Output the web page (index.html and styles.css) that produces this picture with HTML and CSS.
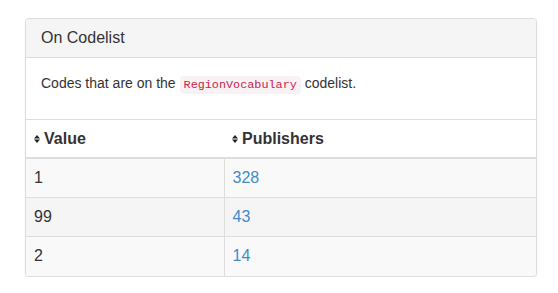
FILE: index.html
```html
<!DOCTYPE html>
<html>
<head>
<meta charset="utf-8">
<link rel="stylesheet" href="styles.css">
</head>
<body>
<div class="wrap">
  <div class="panel">
    <div class="panel-heading"><h3 class="panel-title">On Codelist</h3></div>
    <div class="panel-body">
      <p>Codes that are on the <code>RegionVocabulary</code> codelist.</p>
    </div>
    <table class="table">
      <thead>
        <tr>
          <th class="col-value"><svg class="sort" width="6" height="8" viewBox="0 0 6 8"><polygon points="0,3.4 3,0 6,3.4"/><polygon points="0,4.6 6,4.6 3,8"/></svg>Value</th>
          <th><svg class="sort" width="6" height="8" viewBox="0 0 6 8"><polygon points="0,3.4 3,0 6,3.4"/><polygon points="0,4.6 6,4.6 3,8"/></svg>Publishers</th>
        </tr>
      </thead>
      <tbody>
        <tr class="odd"><td>1</td><td><a href="#">328</a></td></tr>
        <tr class="even"><td>99</td><td><a href="#">43</a></td></tr>
        <tr class="odd"><td>2</td><td><a href="#">14</a></td></tr>
      </tbody>
    </table>
  </div>
</div>
</body>
</html>
```

FILE: styles.css
```css
html, body {
  margin: 0;
  padding: 0;
  background: #fff;
}
body {
  font-family: "Liberation Sans", Arial, sans-serif;
  font-size: 14px;
  line-height: 20px;
  color: #333;
}
.wrap {
  padding: 18px 21px 0 25px;
}
.panel {
  border: 1px solid #ddd;
  border-radius: 4px;
  background: #fff;
  box-shadow: 0 1px 2px rgba(0, 0, 0, 0.08);
  overflow: hidden;
}
.panel-heading {
  background: #f5f5f5;
  border-bottom: 1px solid #ddd;
  padding: 10px 15px;
}
.panel-title {
  margin: 0;
  font-size: 16px;
  font-weight: normal;
  line-height: 1.1;
  color: #333;
}
.panel-body {
  padding: 15px 15px 14px;
}
.panel-body p {
  margin: 0 0 10px;
}
code {
  font-family: "Liberation Mono", "Courier New", monospace;
  font-size: 11.8px;
  color: #c7254e;
  background: #f9f2f4;
  padding: 2px 4px;
  border-radius: 4px;
}
.table {
  width: 100%;
  border-collapse: collapse;
  border-spacing: 0;
  border-top: 1px solid #ddd;
}
.table th {
  text-align: left;
  font-size: 16px;
  font-weight: bold;
  line-height: 21px;
  padding: 8px;
  border-bottom: 2px solid #ddd;
  white-space: nowrap;
}
.col-value {
  width: 182px;
}
.sort {
  fill: #222;
  margin-right: 4px;
  vertical-align: 1px;
}
.table td {
  font-size: 16px;
  line-height: 22.4px;
  padding: 8px;
  border-top: 1px solid #ddd;
}
.table td + td {
  border-left: 1px solid #ddd;
}
.table tr.odd td {
  background: #f9f9f9;
}
.table tr.even td {
  background: #f5f5f5;
}
.table a {
  color: #428bca;
  text-decoration: none;
}
```
